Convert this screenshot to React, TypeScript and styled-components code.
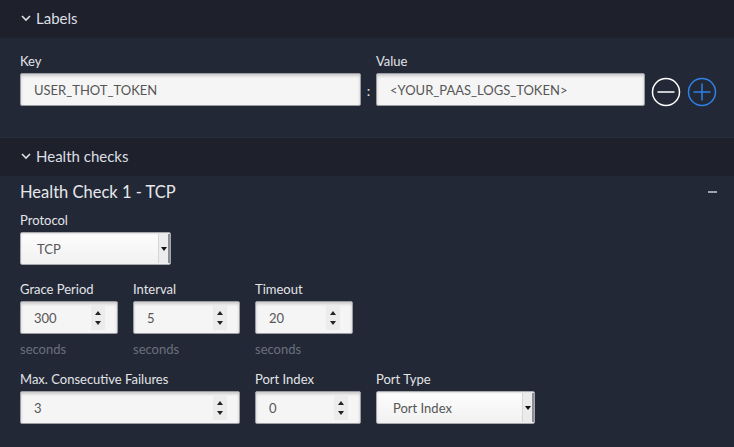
import React from "react";
import styled, { createGlobalStyle } from "styled-components";

const Global = createGlobalStyle`
  html, body { margin: 0; padding: 0; background: #232836; }
  body { font-family: Lato, "Liberation Sans", sans-serif; }
  * { box-sizing: border-box; }
`;

const Page = styled.div`
  width: 734px;
  height: 447px;
  overflow: hidden;
  background: #232836;
`;

const SectionHeader = styled.div`
  height: 38px;
  background: #1e212b;
  display: flex;
  align-items: center;
  padding-left: 20px;
  padding-bottom: 2px;
  gap: 4px;
  color: #dcdfe5;
  font-size: 15px;
`;

const LabelsBody = styled.div`
  height: 100px;
  padding: 16px 18px 0 20px;
  border-bottom: 1px solid #282d3b;
  display: flex;
  align-items: flex-end;
`;

const Field = styled.div<{ $w: number }>`
  width: ${(p) => p.$w}px;
  display: flex;
  flex-direction: column;
`;

const Label = styled.div`
  color: #e2e4e8;
  font-size: 13px;
  height: 20px;
  line-height: 17px;
`;

const TextInput = styled.div`
  height: 33px;
  background: #f5f5f5;
  border: 1px solid #9a9ca2;
  border-radius: 2px;
  box-shadow: inset 0 2px 3px rgba(0, 0, 0, 0.18);
  color: #555;
  font-size: 13px;
  display: flex;
  align-items: center;
  padding-left: 13px;
`;

const Colon = styled.div`
  width: 15px;
  height: 33px;
  display: flex;
  align-items: center;
  justify-content: center;
  color: #e2e4e8;
  font-size: 14px;
  padding-top: 2px;
`;

const LabelsRow = styled.div`
  display: flex;
  align-items: flex-end;
  margin-bottom: 31px;
`;

const IconBtns = styled.div`
  display: flex;
  gap: 6px;
  height: 33px;
  align-items: center;
  margin-left: 6px;
  padding-top: 4px;
`;

const HealthBody = styled.div`
  padding: 6px 17px 0 20px;
`;

const TitleRow = styled.div`
  display: flex;
  justify-content: space-between;
  align-items: center;
  height: 20px;
  margin-bottom: 10px;
`;

const Title = styled.div`
  color: #e6e8ec;
  font-size: 16.5px;
`;

const Collapse = styled.div`
  width: 9px;
  height: 2px;
  background: #9ea3ad;
`;

const Row = styled.div<{ $mb: number }>`
  display: flex;
  gap: 15px;
  margin-bottom: ${(p) => p.$mb}px;
`;

const Select = styled.div<{ $w: number }>`
  width: ${(p) => p.$w}px;
  height: 33px;
  background: linear-gradient(#fdfdfd, #f1f1f1);
  border: 1px solid #a6a8ad;
  border-radius: 2px;
  display: flex;
  color: #555;
  font-size: 13px;
  box-shadow: inset 0 1px 2px rgba(0, 0, 0, 0.12);
`;

const SelectText = styled.div`
  flex: 1;
  display: flex;
  align-items: center;
  padding-left: 16px;
`;

const SelectArrow = styled.div`
  width: 12px;
  margin: 1px 0;
  background: #ececec;
  border-left: 1px solid #d6d6d6;
  border-right: 2px solid #8c8e93;
  display: flex;
  align-items: center;
  justify-content: center;
  &::after {
    content: "";
    border-left: 3px solid transparent;
    border-right: 3px solid transparent;
    border-top: 4px solid #111;
  }
`;

const NumberBox = styled(TextInput)`
  padding-right: 12px;
  justify-content: space-between;
`;

const Spinner = styled.div`
  width: 14px;
  height: 25px;
  background: #ececec;
  display: flex;
  flex-direction: column;
  align-items: center;
  justify-content: center;
  gap: 6px;
`;

const Tri = styled.div<{ $up?: boolean }>`
  border-left: 3px solid transparent;
  border-right: 3px solid transparent;
  ${(p) => (p.$up ? "border-bottom: 4px solid #222;" : "border-top: 4px solid #222;")}
`;

const Hint = styled.div`
  color: #6a707c;
  font-size: 13px;
  margin-top: 7px;
  height: 18px;
`;

const Chevron = () => (
  <svg width="12" height="12" viewBox="0 0 12 12">
    <path d="M2 4 L6 8 L10 4" fill="none" stroke="#dcdfe5" strokeWidth="1.6" />
  </svg>
);

const CircleIcon = ({ color, plus }: { color: string; plus?: boolean }) => (
  <svg width="30" height="30" viewBox="0 0 30 30">
    <circle cx="15" cy="15" r="13.5" fill="none" stroke={color} strokeWidth="1.5" />
    <line x1="6.5" y1="15" x2="23.5" y2="15" stroke={color} strokeWidth="1.5" />
    {plus && <line x1="15" y1="6.5" x2="15" y2="23.5" stroke={color} strokeWidth="1.5" />}
  </svg>
);

const NumberField = ({ label, value, w, hint }: { label: string; value: string; w: number; hint?: string }) => (
  <Field $w={w}>
    <Label>{label}</Label>
    <NumberBox>
      <span>{value}</span>
      <Spinner>
        <Tri $up />
        <Tri />
      </Spinner>
    </NumberBox>
    {hint && <Hint>{hint}</Hint>}
  </Field>
);

export default function App() {
  return (
    <Page>
      <Global />
      <SectionHeader>
        <Chevron />
        <span>Labels</span>
      </SectionHeader>
      <LabelsBody>
        <LabelsRow>
          <Field $w={341}>
            <Label>Key</Label>
            <TextInput>USER_THOT_TOKEN</TextInput>
          </Field>
          <Colon>:</Colon>
          <Field $w={269}>
            <Label>Value</Label>
            <TextInput>&lt;YOUR_PAAS_LOGS_TOKEN&gt;</TextInput>
          </Field>
          <IconBtns>
            <CircleIcon color="#ffffff" />
            <CircleIcon color="#2f80e8" plus />
          </IconBtns>
        </LabelsRow>
      </LabelsBody>
      <SectionHeader>
        <Chevron />
        <span>Health checks</span>
      </SectionHeader>
      <HealthBody>
        <TitleRow>
          <Title>Health Check 1 - TCP</Title>
          <Collapse />
        </TitleRow>
        <Row $mb={16}>
          <Field $w={151}>
            <Label>Protocol</Label>
            <Select $w={151}>
              <SelectText>TCP</SelectText>
              <SelectArrow />
            </Select>
          </Field>
        </Row>
        <Row $mb={12}>
          <NumberField label="Grace Period" value="300" w={98} hint="seconds" />
          <NumberField label="Interval" value="5" w={107} hint="seconds" />
          <NumberField label="Timeout" value="20" w={98} hint="seconds" />
        </Row>
        <Row $mb={0}>
          <NumberField label="Max. Consecutive Failures" value="3" w={220} />
          <NumberField label="Port Index" value="0" w={106} />
          <Field $w={159}>
            <Label>Port Type</Label>
            <Select $w={159}>
              <SelectText>Port Index</SelectText>
              <SelectArrow />
            </Select>
          </Field>
        </Row>
      </HealthBody>
    </Page>
  );
}
